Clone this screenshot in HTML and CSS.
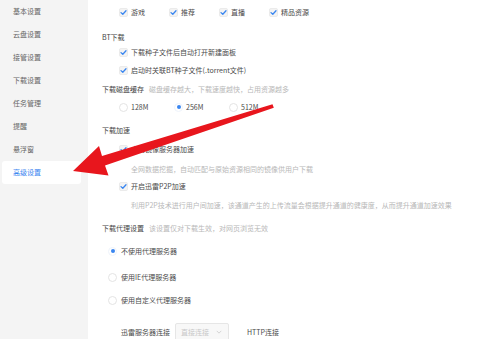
FILE: index.html
```html
<!DOCTYPE html>
<html lang="zh">
<head>
<meta charset="utf-8">
<link rel="stylesheet" href="styles.css">
</head>
<body>
<div class="app">
  <nav class="sidebar">
    <div class="nav-item">基本设置</div>
    <div class="nav-item">云盘设置</div>
    <div class="nav-item">接管设置</div>
    <div class="nav-item">下载设置</div>
    <div class="nav-item">任务管理</div>
    <div class="nav-item">提醒</div>
    <div class="nav-item">悬浮窗</div>
    <div class="nav-item active">高级设置</div>
  </nav>
  <main class="main">
    <div class="row r-top">
      <label class="opt w50"><span class="cb"><svg viewBox="0 0 9 9"><path d="M2 4.6 L3.8 6.3 L7 2.8" /></svg></span>游戏</label>
      <label class="opt w50"><span class="cb"><svg viewBox="0 0 9 9"><path d="M2 4.6 L3.8 6.3 L7 2.8" /></svg></span>推荐</label>
      <label class="opt w50"><span class="cb"><svg viewBox="0 0 9 9"><path d="M2 4.6 L3.8 6.3 L7 2.8" /></svg></span>直播</label>
      <label class="opt"><span class="cb"><svg viewBox="0 0 9 9"><path d="M2 4.6 L3.8 6.3 L7 2.8" /></svg></span>精品资源</label>
    </div>

    <div class="row title m11">BT下载</div>
    <div class="row indent m1"><label class="opt"><span class="cb"><svg viewBox="0 0 9 9"><path d="M2 4.6 L3.8 6.3 L7 2.8" /></svg></span>下载种子文件后自动打开新建面板</label></div>
    <div class="row indent m4"><label class="opt"><span class="cb"><svg viewBox="0 0 9 9"><path d="M2 4.6 L3.8 6.3 L7 2.8" /></svg></span>启动时关联BT种子文件(.torrent文件)</label></div>

    <div class="row title m5">下载磁盘缓存<span class="hint">磁盘缓存越大，下载速度越快，占用资源越多</span></div>
    <div class="row indent m4">
      <label class="opt w55"><span class="rd"></span>128M</label>
      <label class="opt w55"><span class="rd on"></span>256M</label>
      <label class="opt"><span class="rd"></span>512M</label>
    </div>

    <div class="row title m9">下载加速</div>
    <div class="row indent m5"><label class="opt"><span class="cb"><svg viewBox="0 0 9 9"><path d="M2 4.6 L3.8 6.3 L7 2.8" /></svg></span>启用镜像服务器加速</label></div>
    <div class="row sub hint-row m6">全网数据挖掘，自动匹配与原始资源相同的镜像供用户下载</div>
    <div class="row indent m3"><label class="opt"><span class="cb"><svg viewBox="0 0 9 9"><path d="M2 4.6 L3.8 6.3 L7 2.8" /></svg></span>开启迅雷P2P加速</label></div>
    <div class="row sub hint-row m5">利用P2P技术进行用户间加速，该通道产生的上传流量会根据提升通道的健康度，从而提升通道加速效果</div>

    <div class="row title m9">下载代理设置<span class="hint">该设置仅对下载生效，对网页浏览无效</span></div>
    <div class="row proxy m9"><label class="opt"><span class="rd on"></span>不使用代理服务器</label></div>
    <div class="row proxy m12"><label class="opt"><span class="rd"></span>使用IE代理服务器</label></div>
    <div class="row proxy m9"><label class="opt"><span class="rd"></span>使用自定义代理服务器</label></div>

    <div class="row server">
      <span class="srv-label">迅雷服务器连接</span>
      <span class="select">直接连接<svg viewBox="0 0 8 5"><path d="M1 1 L4 4 L7 1" /></svg></span>
      <span class="srv-http">HTTP连接</span>
    </div>
  </main>
</div>
<svg class="arrow" viewBox="0 0 500 339" width="500" height="339">
  <polygon points="73,171 99,146 102,156 272.5,104.3 273.8,107.8 105,165.5 108.5,175.5" />
</svg>
</body>
</html>
```

FILE: styles.css
```css
* { box-sizing: border-box; }
html, body {
  margin: 0;
  padding: 0;
  width: 500px;
  height: 339px;
  overflow: hidden;
  background: #ffffff;
  font-family: "Noto Sans CJK SC", "Noto Sans", sans-serif;
  font-size: 7px;
  color: #444444;
}
.app {
  display: flex;
  height: 339px;
}
.sidebar {
  width: 88px;
  flex: none;
  background: #f4f4f4;
  display: flex;
  flex-direction: column;
}
.nav-item {
  height: 23px;
  line-height: 23px;
  padding-left: 13px;
  color: #666666;
}
.nav-item.active {
  margin: 0 7px 0 2px;
  padding-left: 11px;
  background: #ffffff;
  border-radius: 3px;
  color: #3a86f0;
}
.main {
  flex: 1;
  padding: 5px 0 0 14px;
  display: flex;
  flex-direction: column;
}
.row {
  height: 14px;
  display: flex;
  align-items: center;
  white-space: nowrap;
  flex: none;
}
.m1 { margin-top: 1px; }
.m3 { margin-top: 3px; }
.m4 { margin-top: 4px; }
.m5 { margin-top: 5px; }
.m6 { margin-top: 6px; }
.m9 { margin-top: 9px; }
.m11 { margin-top: 11px; }
.m12 { margin-top: 12px; }
.r-top, .indent { padding-left: 17px; }
.sub { padding-left: 29px; }
.proxy { padding-left: 6px; }
.title { color: #444444; }
.hint { color: #b8b8b8; margin-left: 5px; }
.hint-row { color: #b8b8b8; }
.opt {
  display: flex;
  align-items: center;
  gap: 3px;
  color: #4a4a4a;
}
.proxy .opt { gap: 4px; }
.w50 { width: 50px; }
.w55 { width: 55px; }
.cb {
  width: 9px;
  height: 9px;
  border-radius: 2px;
  background: #f3f3f3;
  border: 1px solid #ebebeb;
  display: flex;
  align-items: center;
  justify-content: center;
}
.cb svg {
  width: 9px;
  height: 9px;
  flex: none;
}
.cb path {
  fill: none;
  stroke: #3a86f0;
  stroke-width: 1.3;
  stroke-linecap: round;
  stroke-linejoin: round;
}
.rd {
  width: 9px;
  height: 9px;
  border-radius: 50%;
  border: 1px solid #e4e4e4;
  background: #ffffff;
  display: flex;
  align-items: center;
  justify-content: center;
}
.rd.on::after {
  content: "";
  width: 4px;
  height: 4px;
  border-radius: 50%;
  background: #3a86f0;
}
.rd.on { border-color: #eef3fb; }
.server {
  margin-top: 16px;
  height: 18px;
  padding-left: 19px;
}
.srv-label { width: 54px; color: #4a4a4a; }
.select {
  width: 54px;
  height: 18px;
  border: 1px solid #e6e6e6;
  border-radius: 2px;
  background: #f8f8f8;
  color: #c8c8c8;
  display: flex;
  align-items: center;
  justify-content: space-between;
  padding: 0 6px 0 5px;
}
.select svg { width: 6px; height: 4px; }
.select path { fill: none; stroke: #d0d0d0; stroke-width: 1.2; }
.srv-http { margin-left: 18px; color: #4a4a4a; }
.arrow {
  position: absolute;
  left: 0;
  top: 0;
  pointer-events: none;
}
.arrow polygon { fill: #e8161d; }
```
